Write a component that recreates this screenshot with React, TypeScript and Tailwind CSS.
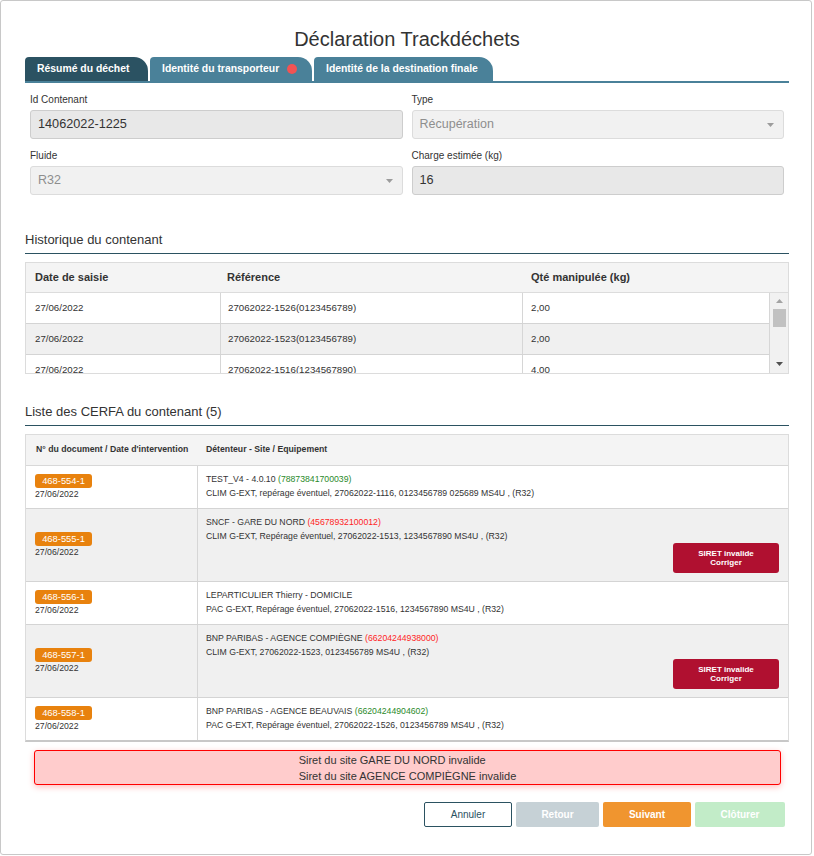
import React from "react";

const history = [
  { date: "27/06/2022", ref: "27062022-1526(0123456789)", qty: "2,00" },
  { date: "27/06/2022", ref: "27062022-1523(0123456789)", qty: "2,00" },
  { date: "27/06/2022", ref: "27062022-1516(1234567890)", qty: "4,00" },
  { date: "27/06/2022", ref: "27062022-1513(1234567890)", qty: "3,00" },
  { date: "27/06/2022", ref: "27062022-1116(0123456789)", qty: "1,50" },
];

type Cerfa = {
  num: string;
  date: string;
  name: string;
  siret?: string;
  valid?: boolean;
  equip: string;
};

const cerfas: Cerfa[] = [
  {
    num: "468-554-1",
    date: "27/06/2022",
    name: "TEST_V4 - 4.0.10",
    siret: "78873841700039",
    valid: true,
    equip: "CLIM G-EXT, repérage éventuel, 27062022-1116, 0123456789 025689 MS4U , (R32)",
  },
  {
    num: "468-555-1",
    date: "27/06/2022",
    name: "SNCF - GARE DU NORD",
    siret: "45678932100012",
    valid: false,
    equip: "CLIM G-EXT, Repérage éventuel, 27062022-1513, 1234567890 MS4U , (R32)",
  },
  {
    num: "468-556-1",
    date: "27/06/2022",
    name: "LEPARTICULIER Thierry - DOMICILE",
    equip: "PAC G-EXT, Repérage éventuel, 27062022-1516, 1234567890 MS4U , (R32)",
  },
  {
    num: "468-557-1",
    date: "27/06/2022",
    name: "BNP PARIBAS - AGENCE COMPIÈGNE",
    siret: "66204244938000",
    valid: false,
    equip: "CLIM G-EXT, 27062022-1523, 0123456789 MS4U , (R32)",
  },
  {
    num: "468-558-1",
    date: "27/06/2022",
    name: "BNP PARIBAS - AGENCE BEAUVAIS",
    siret: "66204244904602",
    valid: true,
    equip: "PAC G-EXT, Repérage éventuel, 27062022-1526, 0123456789 MS4U , (R32)",
  },
];

function Caret({ color = "#9c9c9c", up = false }: { color?: string; up?: boolean }) {
  return (
    <svg width="7" height="4" viewBox="0 0 7 4">
      <path d={up ? "M0 4 L3.5 0 L7 4 Z" : "M0 0 L7 0 L3.5 4 Z"} fill={color} />
    </svg>
  );
}

function Field(props: { label: string; value: string; select?: boolean }) {
  return (
    <div>
      <div className="text-[10px] leading-[14px] mb-[3px]">{props.label}</div>
      {props.select ? (
        <div className="h-[29px] rounded-[3px] border border-[#dcdcdc] bg-[#f1f1f1] pl-[7px] pr-[9px] flex items-center justify-between text-[12.5px] text-[#8e8e8e]">
          <span>{props.value}</span>
          <Caret />
        </div>
      ) : (
        <div className="h-[29px] rounded-[3px] border border-[#cdcdcd] bg-[#e8e8e8] px-[7px] flex items-center text-[12.7px] text-[#333]">
          {props.value}
        </div>
      )}
    </div>
  );
}

function SectionTitle({ children }: { children: React.ReactNode }) {
  return (
    <div className="text-[13px] leading-[16px] pb-[5px] border-b border-[#2b5261] text-[#333]">
      {children}
    </div>
  );
}

export default function App() {
  return (
    <div className="w-[812px] h-[855px] border border-[#c8c8c8] rounded-[3px] bg-white text-[#333] font-['Liberation_Sans',Arial,sans-serif]">
      <div className="ml-[24px] w-[764px]">
        <h1 className="pt-[26px] text-center text-[20px] leading-[24px] font-normal">
          Déclaration Trackdéchets
        </h1>

        {/* onglets */}
        <div className="mt-[6px] flex gap-[2px] border-b-2 border-[#4a8199]">
          <div className="w-[123px] h-[24px] pl-3 flex items-center rounded-tl-[4px] rounded-tr-[14px] bg-[#2b5262] text-white text-[10.4px] font-bold">
            Résumé du déchet
          </div>
          <div className="w-[162px] h-[24px] pl-3 flex items-center gap-[8px] rounded-tl-[4px] rounded-tr-[14px] bg-[#4a8199] text-white text-[10.4px] font-bold">
            Identité du transporteur
            <span className="w-[10px] h-[10px] rounded-full bg-[#f25353]"></span>
          </div>
          <div className="w-[179px] h-[24px] pl-3 flex items-center rounded-tl-[4px] rounded-tr-[14px] bg-[#4a8199] text-white text-[10.4px] font-bold">
            Identité de la destination finale
          </div>
        </div>

        {/* formulaire */}
        <div className="mt-[10px] px-[5px] grid grid-cols-2 gap-x-[9px] gap-y-[10px]">
          <Field label="Id Contenant" value="14062022-1225" />
          <Field label="Type" value="Récupération" select />
          <Field label="Fluide" value="R32" select />
          <Field label="Charge estimée (kg)" value="16" />
        </div>

        {/* historique */}
        <div className="mt-[37px]">
          <SectionTitle>Historique du contenant</SectionTitle>
        </div>
        <div className="mt-[8px] border border-[#dcdcdc]">
          <div className="grid grid-cols-[194px_302px_1fr] h-[30px] items-center bg-[#f4f4f4] border-b border-[#dcdcdc] text-[11px] font-bold">
            <div className="pl-[9px]">Date de saisie</div>
            <div className="pl-[7px]">Référence</div>
            <div className="pl-[9px]">Qté manipulée (kg)</div>
          </div>
          <div className="h-[80px] flex overflow-hidden">
            <div className="w-[744px] border-r border-[#d6d6d6]">
              {history.map((h, i) => (
                <div
                  key={i}
                  className={
                    "grid grid-cols-[194px_302px_1fr] h-[31px] border-b border-[#d4d4d4] text-[9.7px] " +
                    (i % 2 === 1 ? "bg-[#f0f0f0]" : "bg-white")
                  }
                >
                  <div className="pl-[9px] flex items-center">{h.date}</div>
                  <div className="pl-[7px] flex items-center border-l border-[#d6d6d6]">{h.ref}</div>
                  <div className="pl-[8px] flex items-center border-l border-[#d6d6d6]">{h.qty}</div>
                </div>
              ))}
            </div>
            <div className="flex-1 bg-[#f1f1f1] flex flex-col items-center">
              <div className="h-[16px] flex items-center">
                <Caret color="#a3a3a3" up />
              </div>
              <div className="w-[13px] h-[18px] bg-[#c1c1c1]"></div>
              <div className="flex-1"></div>
              <div className="h-[18px] flex items-center">
                <Caret color="#505050" />
              </div>
            </div>
          </div>
        </div>

        {/* CERFA */}
        <div className="mt-[30px]">
          <SectionTitle>Liste des CERFA du contenant (5)</SectionTitle>
        </div>
        <div className="mt-[8px] border border-[#dcdcdc] border-b-2 border-b-[#c8c8c8]">
          <div className="grid grid-cols-[171px_1fr] h-[31px] items-center bg-[#f4f4f4] border-b border-[#d8d8d8] text-[8.7px] font-bold">
            <div className="pl-[10px]">N° du document / Date d'intervention</div>
            <div className="pl-[9px]">Détenteur - Site / Equipement</div>
          </div>
          {cerfas.map((c, i) => (
            <div
              key={c.num}
              className={
                "grid grid-cols-[171px_1fr] text-[8.7px] " +
                (i < cerfas.length - 1 ? "border-b border-[#d4d4d4] " : "") +
                (i % 2 === 1 ? "bg-[#f0f0f0]" : "bg-white")
              }
            >
              <div className="pl-[9px] flex flex-col justify-center items-start">
                <div className="w-[57px] h-[14px] rounded-[3px] bg-[#e8820e] text-white text-[9.4px] leading-[14px] text-center">
                  {c.num}
                </div>
                <div className="leading-[13px]">{c.date}</div>
              </div>
              <div className="border-l border-[#d6d6d6] pl-[8px] pr-[9px] pt-[6px] pb-[8px]">
                <div className="leading-[14px]">
                  {c.name}
                  {c.siret && (
                    <>
                      {" "}
                      <span className={c.valid ? "text-[#2a8a2a]" : "text-[#ff1f1f]"}>({c.siret})</span>
                    </>
                  )}
                </div>
                <div className="leading-[14px]">{c.equip}</div>
                {c.valid === false && (
                  <div className="flex justify-end">
                    <button className="w-[106px] h-[30px] rounded-[3px] bg-[#b01030] text-white text-[8px] leading-[9px] font-bold flex flex-col items-center justify-center">
                      <span>SIRET invalide</span>
                      <span>Corriger</span>
                    </button>
                  </div>
                )}
              </div>
            </div>
          ))}
        </div>

        {/* erreurs */}
        <div className="mt-[8px] ml-[9px] mr-[8px] h-[35px] rounded-[3px] border border-[#ff0000] bg-[#ffcccc] shadow-[0_2px_6px_rgba(255,0,0,0.25)] flex justify-center items-center">
          <div className="text-[11px] leading-[16px]">
            <div>Siret du site GARE DU NORD invalide</div>
            <div>Siret du site AGENCE COMPIÈGNE invalide</div>
          </div>
        </div>

        {/* actions */}
        <div className="mt-[17px] mr-[4px] flex justify-end gap-1 text-[10px]">
          <button className="w-[88px] h-[25px] rounded-[2px] border border-[#2b5261] bg-white text-[#2b5261]">
            Annuler
          </button>
          <button className="w-[83px] h-[25px] rounded-[2px] bg-[#c6d1d6] text-white font-bold">
            Retour
          </button>
          <button className="w-[88px] h-[25px] rounded-[2px] bg-[#f0952f] text-white font-bold">
            Suivant
          </button>
          <button className="w-[90px] h-[25px] rounded-[2px] bg-[#c2ecc8] text-white font-bold">
            Clôturer
          </button>
        </div>
      </div>
    </div>
  );
}
